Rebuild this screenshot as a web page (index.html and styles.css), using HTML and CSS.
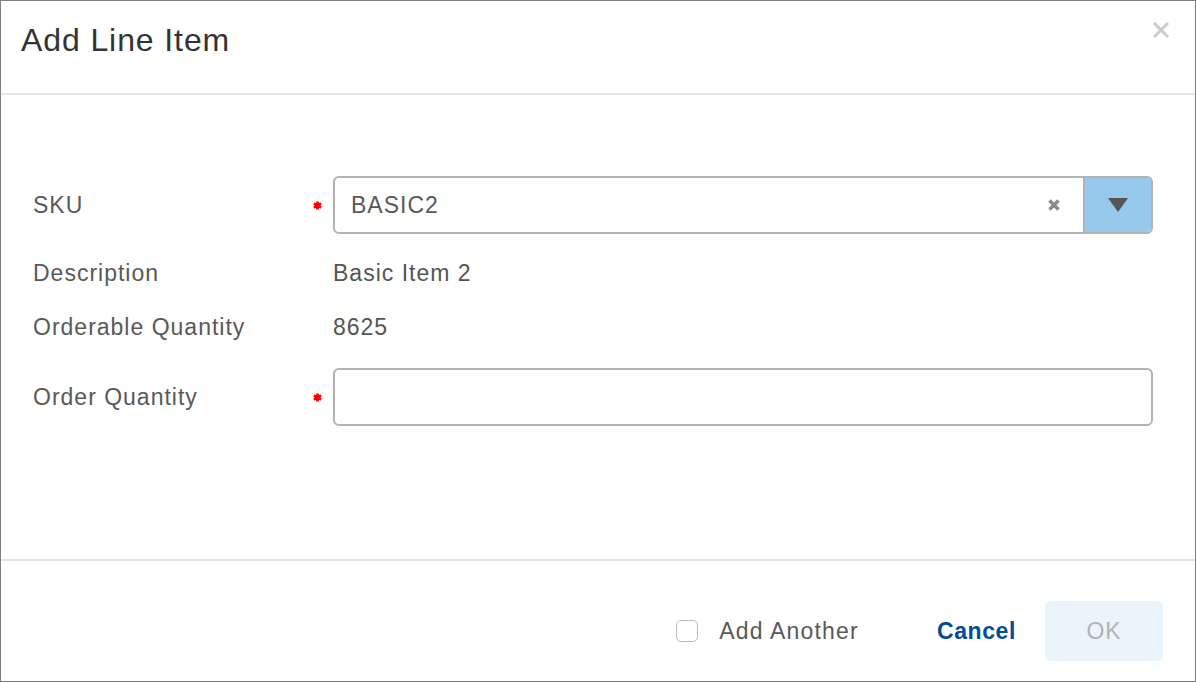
FILE: index.html
```html
<!DOCTYPE html>
<html>
<head>
<meta charset="utf-8">
<link rel="stylesheet" href="styles.css">
</head>
<body>
<div class="dialog">
  <div class="dialog-header">
    <h1 class="dialog-title">Add Line Item</h1>
    <button class="close-btn" aria-label="Close">
      <svg width="16" height="16" viewBox="0 0 16 16"><path d="M2 2 L14 14 M14 2 L2 14" stroke="#cccccc" stroke-width="3" stroke-linecap="square"/></svg>
    </button>
  </div>
  <div class="dialog-body">
    <div class="form">
      <div class="form-row row-input">
        <div class="label">SKU</div>
        <div class="req"><svg width="9" height="9" viewBox="0 0 10 10"><path d="M5 0.5 V9.5 M1 2.8 L9 7.2 M9 2.8 L1 7.2" stroke="#ff0000" stroke-width="3"/></svg></div>
        <div class="combo">
          <div class="combo-value">BASIC2</div>
          <div class="combo-clear"><svg width="14" height="14" viewBox="0 0 14 14"><path d="M2.5 2.5 L11.5 11.5 M11.5 2.5 L2.5 11.5" stroke="#8a8a8a" stroke-width="3.4"/></svg></div>
          <div class="combo-toggle"><svg width="22" height="16" viewBox="0 0 22 16"><path d="M1 1 H21 L11 15 Z" fill="#555555"/></svg></div>
        </div>
      </div>
      <div class="form-row row-text">
        <div class="label">Description</div>
        <div class="req"></div>
        <div class="value">Basic Item 2</div>
      </div>
      <div class="form-row row-text">
        <div class="label">Orderable Quantity</div>
        <div class="req"></div>
        <div class="value">8625</div>
      </div>
      <div class="form-row row-input">
        <div class="label">Order Quantity</div>
        <div class="req"><svg width="9" height="9" viewBox="0 0 10 10"><path d="M5 0.5 V9.5 M1 2.8 L9 7.2 M9 2.8 L1 7.2" stroke="#ff0000" stroke-width="3"/></svg></div>
        <div class="text-input"></div>
      </div>
    </div>
  </div>
  <div class="dialog-footer">
    <label class="check">
      <span class="check-box"></span>
      <span class="check-label">Add Another</span>
    </label>
    <button class="btn-link">Cancel</button>
    <button class="btn-ok">OK</button>
  </div>
</div>
</body>
</html>
```
FILE: styles.css
```css
* { box-sizing: border-box; }
html, body { margin: 0; padding: 0; background: #ffffff; }
body {
  font-family: "Liberation Sans", Arial, Helvetica, sans-serif;
  width: 1196px;
  height: 682px;
  overflow: hidden;
}
.dialog {
  width: 1196px;
  height: 682px;
  border: 1px solid #7f7f7f;
  display: flex;
  flex-direction: column;
  background: #fff;
}
.dialog-header {
  height: 94px;
  border-bottom: 2px solid #e5e5e5;
  display: flex;
  justify-content: space-between;
  align-items: flex-start;
  padding: 0 26px 0 20px;
  flex: none;
}
.dialog-title {
  margin: 0;
  padding-top: 19px;
  font-size: 32px;
  line-height: 40px;
  font-weight: normal;
  color: #333333;
  letter-spacing: 0.9px;
}
.close-btn {
  margin-top: 21px;
  padding: 0;
  border: 0;
  background: none;
  width: 16px;
  height: 16px;
  display: flex;
}
.dialog-body {
  flex: 1;
  padding: 81px 42px 0 32px;
}
.form {
  display: flex;
  flex-direction: column;
  gap: 24px;
}
.form-row {
  display: grid;
  grid-template-columns: 280px 20px 1fr;
  align-items: center;
  font-size: 23px;
  letter-spacing: 1px;
  color: #595959;
}
.row-input { height: 58px; }
.row-text { height: 30px; }
.row-text + .row-input { margin-top: 2px; }
.label { color: #595959; }
.value { color: #555555; }
.req { display: flex; align-items: center; padding-left: 0; }
.req svg { display: block; }
.combo {
  height: 58px;
  border: 2px solid #b3b3b3;
  border-radius: 6px;
  display: flex;
  align-items: stretch;
  overflow: hidden;
}
.combo-value {
  flex: 1;
  display: flex;
  align-items: center;
  padding-left: 16px;
  color: #595959;
}
.combo-clear {
  width: 56px;
  display: flex;
  align-items: center;
  justify-content: center;
  padding-right: 2px;
}
.combo-toggle {
  width: 68px;
  background: #97c9ec;
  border-left: 2px solid #b3b3b3;
  display: flex;
  align-items: center;
  justify-content: center;
}
.text-input {
  height: 58px;
  border: 2px solid #b3b3b3;
  border-radius: 6px;
}
.dialog-footer {
  height: 122px;
  border-top: 2px solid #e5e5e5;
  flex: none;
  display: flex;
  justify-content: flex-end;
  align-items: center;
  padding: 40px 32px 20px 0;
  font-size: 23px;
  letter-spacing: 1px;
}
.check {
  display: flex;
  align-items: center;
  gap: 21px;
}
.check-box {
  width: 22px;
  height: 22px;
  border: 1.5px solid #bdbdbd;
  border-radius: 5px;
  background: #fff;
}
.check-label { color: #595959; letter-spacing: 1.2px; }
.btn-link {
  margin-left: 78px;
  border: 0;
  background: none;
  padding: 0;
  font: inherit;
  font-weight: bold;
  letter-spacing: 0.6px;
  color: #004c9c;
}
.btn-ok {
  margin-left: 29px;
  width: 118px;
  height: 60px;
  border: 0;
  border-radius: 6px;
  background: #eaf4fd;
  color: #b3b3b3;
  font: inherit;
  letter-spacing: 1px;
}
```
